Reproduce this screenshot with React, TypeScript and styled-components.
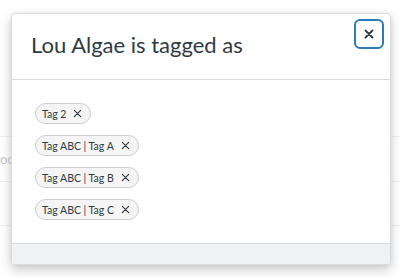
import React from "react"
import styled, { createGlobalStyle } from "styled-components"

const GlobalStyle = createGlobalStyle`
  html, body {
    margin: 0;
    padding: 0;
    background: #ffffff;
    font-family: Lato, "Open Sans", sans-serif;
  }
`

const Page = styled.div`
  position: relative;
  width: 400px;
  height: 277px;
  overflow: hidden;
  background: #ffffff;
`

const BackgroundRows = styled.div`
  display: flex;
  flex-direction: column;
  padding-top: 136px;
`

const BackgroundRow = styled.div<{ $height: number }>`
  height: ${(p) => p.$height}px;
  border-top: 1px solid #d7dadd;
  display: flex;
  align-items: center;
  font-size: 13px;
  color: #6b7780;
  padding-left: 0;
`

const Overlay = styled.div`
  position: absolute;
  inset: 0;
  background: rgba(255, 255, 255, 0.6);
`

const Modal = styled.div`
  position: absolute;
  left: 11px;
  top: 13px;
  width: 380px;
  height: 252px;
  background: #ffffff;
  border: 1px solid #d9dcde;
  border-radius: 4px;
  box-sizing: border-box;
  box-shadow: 0 5px 12px rgba(0, 0, 0, 0.2), 0 0 6px rgba(0, 0, 0, 0.06);
  display: flex;
  flex-direction: column;
  overflow: hidden;
`

const Header = styled.div`
  position: relative;
  height: 66px;
  flex-shrink: 0;
  display: flex;
  align-items: center;
  padding: 0 19px 4px;
  box-sizing: border-box;
  border-bottom: 1px solid #d7dadd;
`

const Title = styled.h2`
  margin: 0;
  font-size: 22px;
  font-weight: 400;
  color: #2d3b45;
  letter-spacing: 0;
`

const CloseButton = styled.button`
  position: absolute;
  top: 5px;
  right: 6px;
  width: 30px;
  height: 30px;
  border: 2px solid #2b7abc;
  border-radius: 6px;
  background: #ffffff;
  display: flex;
  align-items: center;
  justify-content: center;
  padding: 0;
  cursor: pointer;
`

const Body = styled.div`
  flex: 1;
  padding: 23px 23px;
  display: flex;
  flex-direction: column;
  align-items: flex-start;
  gap: 11px;
`

const Pill = styled.span`
  display: inline-flex;
  align-items: center;
  height: 21px;
  box-sizing: border-box;
  padding: 0 8px 0 6px;
  gap: 7px;
  background: #f5f5f5;
  border: 1px solid #c7cdd1;
  border-radius: 999px;
  font-size: 10.5px;
  color: #2d3b45;
  white-space: nowrap;
`

const Footer = styled.div`
  height: 20px;
  flex-shrink: 0;
  background: #f0f1f2;
  border-top: 1px solid #d7dadd;
`

const XIcon = ({ size, weight }: { size: number; weight: number }) => (
  <svg width={size} height={size} viewBox="0 0 10 10" fill="none">
    <path
      d="M1.5 1.5 L8.5 8.5 M8.5 1.5 L1.5 8.5"
      stroke="#2d3b45"
      strokeWidth={weight}
      strokeLinecap="round"
    />
  </svg>
)

const tags = ["Tag 2", "Tag ABC | Tag A", "Tag ABC | Tag B", "Tag ABC | Tag C"]

export default function App() {
  return (
    <>
      <GlobalStyle />
      <Page>
        <BackgroundRows>
          <BackgroundRow $height={44}>oo</BackgroundRow>
          <BackgroundRow $height={43} />
          <BackgroundRow $height={43} />
        </BackgroundRows>
        <Overlay />
        <Modal role="dialog">
          <Header>
            <Title>Lou Algae is tagged as</Title>
            <CloseButton aria-label="Close">
              <XIcon size={10} weight={1.8} />
            </CloseButton>
          </Header>
          <Body>
            {tags.map((t) => (
              <Pill key={t}>
                {t}
                <XIcon size={9} weight={1.3} />
              </Pill>
            ))}
          </Body>
          <Footer />
        </Modal>
      </Page>
    </>
  )
}
